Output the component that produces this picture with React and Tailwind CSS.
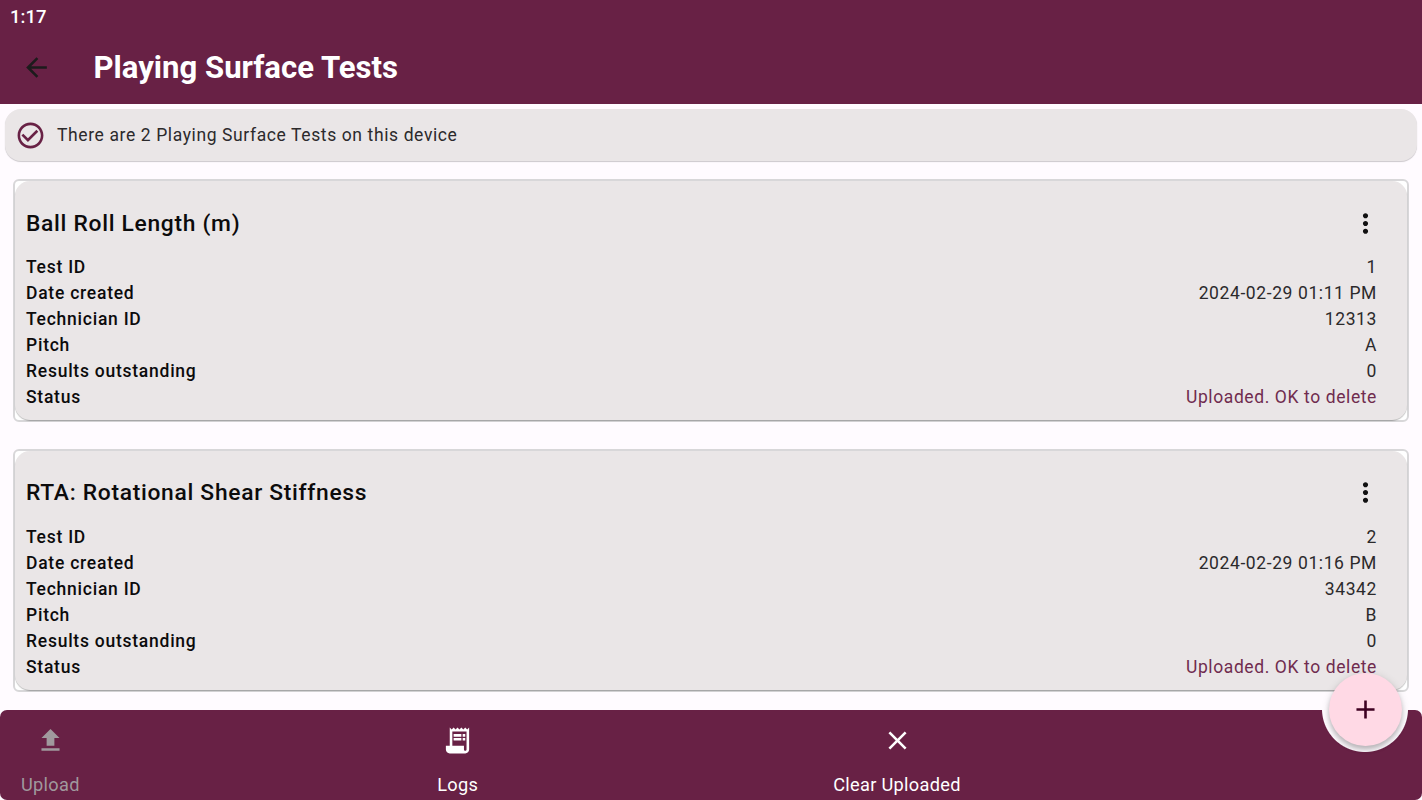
import React from 'react';
import {
    MdAdd,
    MdArrowBack,
    MdCheckCircleOutline,
    MdClose,
    MdFileUpload,
    MdMoreVert,
    MdReceiptLong
} from 'react-icons/md';

const tests = [
    {
        id: '1',
        name: 'Ball Roll Length (m)',
        created: '2024-02-29 01:11 PM',
        technician: '12313',
        pitch: 'A',
        outstanding: '0',
        status: 'Uploaded. OK to delete'
    },
    {
        id: '2',
        name: 'RTA: Rotational Shear Stiffness',
        created: '2024-02-29 01:16 PM',
        technician: '34342',
        pitch: 'B',
        outstanding: '0',
        status: 'Uploaded. OK to delete'
    }
];

const DetailRow = ({ label, value, valueClass = 'text-[#2c2a2c]' }) => (
    <div className="flex h-[25.95px] items-center justify-between">
        <dt className="text-[17.5px] font-medium tracking-[0.75px] text-[#0c0b0c]">{label}</dt>
        <dd className={`text-[17.5px] tracking-[0.6px] ${valueClass}`}>{value}</dd>
    </div>
);

const TestCard = ({ test }) => (
    <article className="h-[243px] rounded-[6px] border-2 border-[#d8d7d9] bg-white">
        <div className="h-full rounded-[15px] bg-[#eae6e7] pl-[11px] pr-[30px] pt-[16px] shadow-[0_1px_1px_rgba(0,0,0,0.25)]">
            <div className="flex h-[52px] items-center justify-between">
                <h2 className="pt-[2px] text-[22.8px] font-medium tracking-[0.7px] text-[#0c0b0c]">{test.name}</h2>
                <button aria-label="Test options" className="-mr-[3.5px]">
                    <MdMoreVert className="size-[31px] text-[#111011]" />
                </button>
            </div>
            <dl className="pt-[5.5px]">
                <DetailRow label="Test ID" value={test.id} />
                <DetailRow label="Date created" value={test.created} />
                <DetailRow label="Technician ID" value={test.technician} />
                <DetailRow label="Pitch" value={test.pitch} />
                <DetailRow label="Results outstanding" value={test.outstanding} />
                <DetailRow label="Status" value={test.status} valueClass="text-[#702c4f]" />
            </dl>
        </div>
    </article>
);

const NavAction = ({ icon: Icon, label, className }) => (
    <button className={`flex flex-col items-center pt-[15px] ${className}`}>
        <Icon className="size-[31px]" />
        <span className="mt-[16px] text-[18.2px] leading-[26px] tracking-[0.3px] whitespace-nowrap">{label}</span>
    </button>
);

const App = () => {
    return (
        <div className="relative flex h-[800px] w-full flex-col overflow-hidden bg-[#fffbff] font-['Roboto',sans-serif]">
            {/* Status bar and title */}
            <header className="h-[103.5px] shrink-0 bg-[#682145] text-white">
                <div className="flex h-[32px] items-center pt-[3px] pl-[10px] text-[18.5px] font-medium">1:17</div>
                <div className="flex h-[70px] items-center pl-[21px]">
                    <button aria-label="Back">
                        <MdArrowBack className="size-[31px] text-[#1c1b1c]" />
                    </button>
                    <h1 className="ml-[41.5px] pt-[2px] text-[31.1px] font-bold">Playing Surface Tests</h1>
                </div>
            </header>

            <main className="flex-1">
                <div className="mx-[5px] mt-[5.5px] flex h-[52px] items-center rounded-[16px] bg-[#eae6e7] pl-[10px] shadow-[0_1px_1px_rgba(0,0,0,0.2)]">
                    <MdCheckCircleOutline className="size-[31px] text-[#682145]" />
                    <p className="ml-[11px] text-[17.5px] tracking-[0.61px] text-[#2c2a2c]">
                        There are 2 Playing Surface Tests on this device
                    </p>
                </div>
                <section className="mx-[13px] mt-[18px] flex flex-col gap-[26.5px]">
                    {tests.map((test) => (
                        <TestCard key={test.id} test={test} />
                    ))}
                </section>
            </main>

            {/* Bottom bar with a notch cut out around the add button */}
            <footer className="flex h-[90.5px] shrink-0 rounded-[7px] bg-[radial-gradient(circle_at_calc(100%_-_57px)_-1px,transparent_42.5px,#682145_43.5px)] text-white">
                <NavAction icon={MdFileUpload} label="Upload" className="ml-[21px] text-[#a0999d]" />
                <NavAction icon={MdReceiptLong} label="Logs" className="ml-[357.5px]" />
                <NavAction icon={MdClose} label="Clear Uploaded" className="ml-[355px]" />
            </footer>

            <button
                aria-label="Add test"
                className="absolute right-[20.5px] bottom-[54.5px] flex size-[73px] items-center justify-center rounded-full bg-[#ffd9e5] shadow-[0_4px_5px_rgba(0,0,0,0.22),0_1px_8px_rgba(0,0,0,0.12)]"
            >
                <MdAdd className="size-[31px] text-[#3e0021]" />
            </button>
        </div>
    );
};

export default App;
